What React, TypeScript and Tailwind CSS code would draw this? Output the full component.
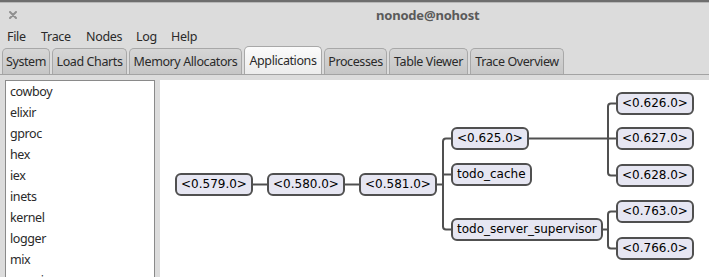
import React from "react";

const tabs = [
  { label: "System", w: 48 },
  { label: "Load Charts", w: 75 },
  { label: "Memory Allocators", w: 113 },
  { label: "Applications", w: 78, active: true },
  { label: "Processes", w: 63 },
  { label: "Table Viewer", w: 79 },
  { label: "Trace Overview", w: 94 },
];

const menus = [
  { label: "File", w: 34 },
  { label: "Trace", w: 45 },
  { label: "Nodes", w: 50 },
  { label: "Log", w: 35 },
  { label: "Help", w: 40 },
];

const apps = ["cowboy", "elixir", "gproc", "hex", "iex", "inets", "kernel", "logger", "mix", "mnesia"];

const nodes = [
  { label: "<0.579.0>", x: 15, y: 93 },
  { label: "<0.580.0>", x: 107, y: 93 },
  { label: "<0.581.0>", x: 199, y: 93 },
  { label: "<0.625.0>", x: 291, y: 47 },
  { label: "todo_cache", x: 291, y: 83 },
  { label: "todo_server_supervisor", x: 291, y: 138 },
  { label: "<0.626.0>", x: 456, y: 12 },
  { label: "<0.627.0>", x: 456, y: 47 },
  { label: "<0.628.0>", x: 456, y: 84 },
  { label: "<0.763.0>", x: 456, y: 120 },
  { label: "<0.766.0>", x: 456, y: 157 },
];

function Bus({ x0, x1, ys, yIn }: { x0: number; x1: number; ys: number[]; yIn: number }) {
  const top = Math.min(...ys);
  const bot = Math.max(...ys);
  const r = 3;
  return (
    <g>
      <line x1={x0} y1={yIn} x2={x1} y2={yIn} />
      <path d={`M ${x1 + 8} ${top} H ${x1 + r} Q ${x1} ${top} ${x1} ${top + r} V ${bot - r} Q ${x1} ${bot} ${x1 + r} ${bot} H ${x1 + 8}`} />
      {ys
        .filter((y) => y !== top && y !== bot)
        .map((y) => (
          <line key={y} x1={x1} y1={y} x2={x1 + 8} y2={y} />
        ))}
    </g>
  );
}

export default function App() {
  return (
    <div
      className="w-[709px] h-[277px] overflow-hidden bg-[#dcdcdc] flex flex-col text-[#2e2e2e]"
      style={{ fontFamily: '"Noto Sans", "Open Sans", sans-serif' }}
    >
      {/* title bar */}
      <div className="h-[26px] shrink-0 border-t-2 border-[#6e6e6e] relative flex items-center">
        <div className="absolute left-0 right-0 top-0 h-px bg-[#b8b8b8]" />
        <div className="pl-[9px] pt-[2px] w-[20px] flex items-center">
          <svg width="8" height="8" viewBox="0 0 8 8">
            <path d="M1 1 L7 7 M7 1 L1 7" stroke="#909090" strokeWidth="2" strokeLinecap="round" />
          </svg>
        </div>
        <div className="absolute left-[376px] top-[4px] text-[13px] font-bold text-[#5a5a5a] tracking-[-0.2px]">
          nonode@nohost
        </div>
      </div>
      {/* menu bar */}
      <div className="h-[20px] shrink-0 flex items-center pl-[7px] pt-[2px] text-[12.5px] text-[#2a2a2a] tracking-[-0.3px]">
        {menus.map((m) => (
          <span key={m.label} style={{ width: m.w }} className="shrink-0">
            {m.label}
          </span>
        ))}
      </div>
      {/* tabs */}
      <div className="h-[29px] shrink-0 flex items-end gap-[2px] pl-[2px] border-b border-[#a3a3a3] pt-[1px]">
        {tabs.map((t) => (
          <div
            key={t.label}
            style={{ width: t.w }}
            className={
              t.active
                ? "h-[28px] pt-[1px] rounded-t-[5px] border border-b-0 border-[#a8a8a8] bg-gradient-to-b from-[#fbfbfb] to-[#ececec] flex items-center justify-center text-[12.5px] text-[#2a2a2a] tracking-[-0.4px]"
                : "h-[26px] pt-[2px] rounded-t-[5px] border border-b-0 border-[#a8a8a8] bg-gradient-to-b from-[#d6d6d6] to-[#c6c6c6] flex items-center justify-center text-[12.5px] text-[#2a2a2a] tracking-[-0.4px]"
            }
          >
            {t.label}
          </div>
        ))}
      </div>
      {/* content */}
      <div className="flex-1 flex pl-[5px] pt-[5px] gap-[5px] min-h-0">
        <div className="w-[150px] shrink-0 bg-white border border-[#8a8a8a] border-b-0 pl-[4px] text-[12.5px] text-[#2a2a2a] tracking-[-0.4px]">
          {apps.map((a) => (
            <div key={a} className="h-[21px] leading-[21px]">
              {a}
            </div>
          ))}
        </div>
        <div className="flex-1 bg-white relative">
          <svg className="absolute left-0 top-0" width="549" height="200" fill="none" stroke="#505050" strokeWidth="2">
            <line x1={93} y1={104.5} x2={107} y2={104.5} />
            <line x1={184} y1={104.5} x2={199} y2={104.5} />
            <Bus x0={276} x1={283} ys={[58.5, 94.5, 149.5]} yIn={104.5} />
            <Bus x0={368} x1={448} ys={[23.5, 58.5, 95.5]} yIn={58.5} />
            <Bus x0={440} x1={448} ys={[131.5, 168.5]} yIn={149.5} />
          </svg>
          {nodes.map((n) => (
            <div
              key={n.label}
              className="absolute h-[23px] px-[4px] border-2 border-[#505050] rounded-[6px] bg-[#e6e6f2] text-[12px] leading-[19px] text-black whitespace-nowrap"
              style={{ left: n.x, top: n.y, fontFamily: '"DejaVu Sans", sans-serif' }}
            >
              {n.label}
            </div>
          ))}
        </div>
      </div>
    </div>
  );
}
